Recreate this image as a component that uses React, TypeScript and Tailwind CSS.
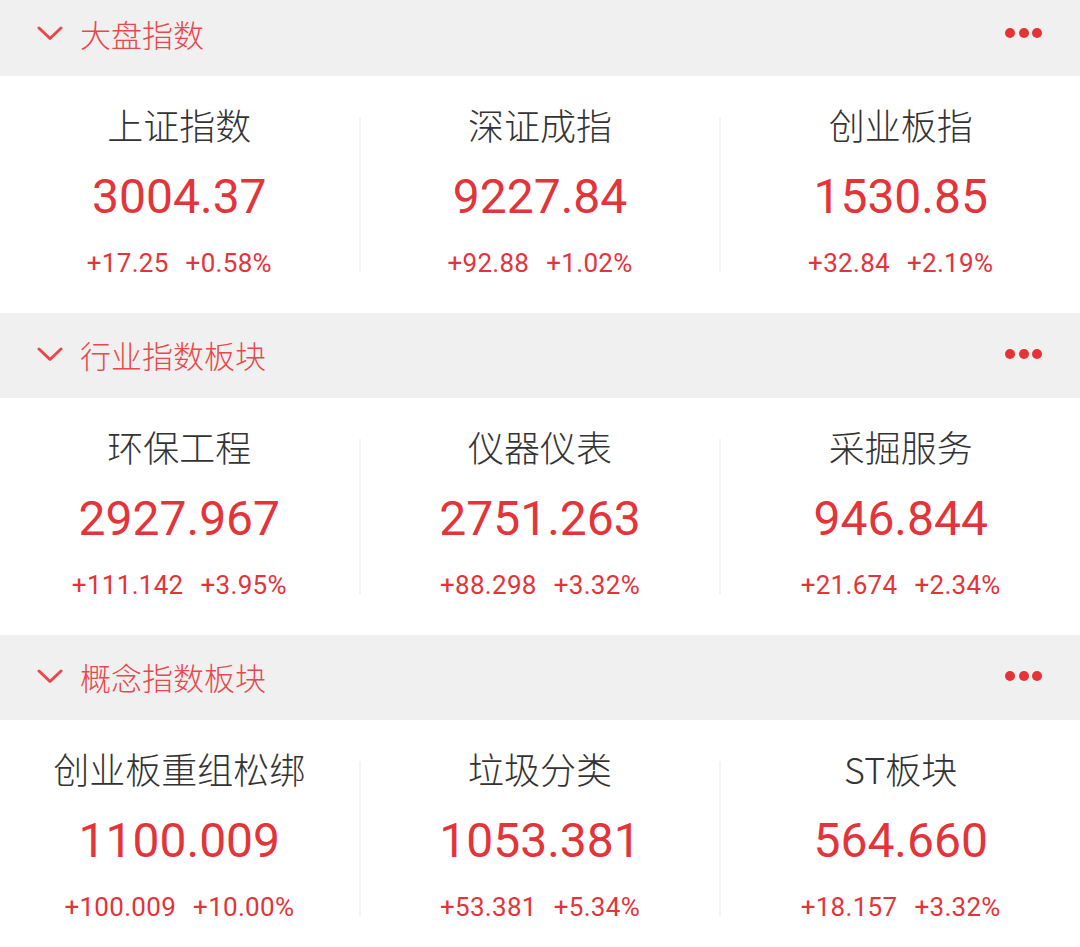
import { ReactNode } from "react";

interface Quote {
  name: string;
  price: string;
  change: string;
  percent: string;
}

interface Section {
  title: string;
  quotes: Quote[];
}

const SECTIONS: Section[] = [
  {
    title: "大盘指数",
    quotes: [
      { name: "上证指数", price: "3004.37", change: "+17.25", percent: "+0.58%" },
      { name: "深证成指", price: "9227.84", change: "+92.88", percent: "+1.02%" },
      { name: "创业板指", price: "1530.85", change: "+32.84", percent: "+2.19%" },
    ],
  },
  {
    title: "行业指数板块",
    quotes: [
      { name: "环保工程", price: "2927.967", change: "+111.142", percent: "+3.95%" },
      { name: "仪器仪表", price: "2751.263", change: "+88.298", percent: "+3.32%" },
      { name: "采掘服务", price: "946.844", change: "+21.674", percent: "+2.34%" },
    ],
  },
  {
    title: "概念指数板块",
    quotes: [
      { name: "创业板重组松绑", price: "1100.009", change: "+100.009", percent: "+10.00%" },
      { name: "垃圾分类", price: "1053.381", change: "+53.381", percent: "+5.34%" },
      { name: "ST板块", price: "564.660", change: "+18.157", percent: "+3.32%" },
    ],
  },
];

const SectionHeader = ({ title, first }: { title: string; first?: boolean }) => (
  <div
    className={`flex items-center justify-between bg-[#f0f0f0] pl-[37px] pr-[38px] ${
      first ? "h-[76px] pb-[10px]" : "h-[85px] pb-[3px]"
    }`}
  >
    <div className="flex items-center">
      {/* chevron */}
      <svg width="26" height="15" viewBox="0 0 26 15" className="mr-[17px]">
        <polyline
          points="2,2 13,12.5 24,2"
          fill="none"
          stroke="#e8474c"
          strokeWidth="3"
          strokeLinecap="round"
          strokeLinejoin="round"
        />
      </svg>
      <span className="text-[31px] leading-none font-light text-[#e8474c] font-['Noto_Sans_CJK_SC',sans-serif]">
        {title}
      </span>
    </div>
    {/* more dots */}
    <div className="flex gap-[3.5px]">
      <span className="w-[10px] h-[10px] rounded-full bg-[#e53338]" />
      <span className="w-[10px] h-[10px] rounded-full bg-[#e53338]" />
      <span className="w-[10px] h-[10px] rounded-full bg-[#e53338]" />
    </div>
  </div>
);

const QuoteCell = ({ q }: { q: Quote }) => (
  <div className="flex-1 flex flex-col items-center pt-[26px] pb-[35px]">
    <div className="text-[36px] leading-[44px] font-light text-[#333333] font-['Noto_Sans_CJK_SC',sans-serif]">
      {q.name}
    </div>
    <div className="mt-[23px] text-[48px] leading-[56px] font-[450] text-[#e3343a] font-['Roboto',sans-serif]">
      {q.price}
    </div>
    <div className="mt-[23px] flex gap-[17px] text-[26px] leading-[30px] tracking-[0.3px] text-[#e3343a] font-['Roboto',sans-serif]">
      <span>{q.change}</span>
      <span>{q.percent}</span>
    </div>
  </div>
);

const Divider = () => <div className="w-[2px] self-stretch my-[41px] bg-[#f3f3f3]" />;

const Card = ({ children }: { children: ReactNode }) => (
  <div className="flex bg-white">{children}</div>
);

export default function App() {
  return (
    <div className="w-[1080px] h-[947px] overflow-hidden bg-white">
      {SECTIONS.map((s, i) => (
        <div key={s.title}>
          <SectionHeader title={s.title} first={i === 0} />
          <Card>
            <QuoteCell q={s.quotes[0]} />
            <Divider />
            <QuoteCell q={s.quotes[1]} />
            <Divider />
            <QuoteCell q={s.quotes[2]} />
          </Card>
        </div>
      ))}
    </div>
  );
}
